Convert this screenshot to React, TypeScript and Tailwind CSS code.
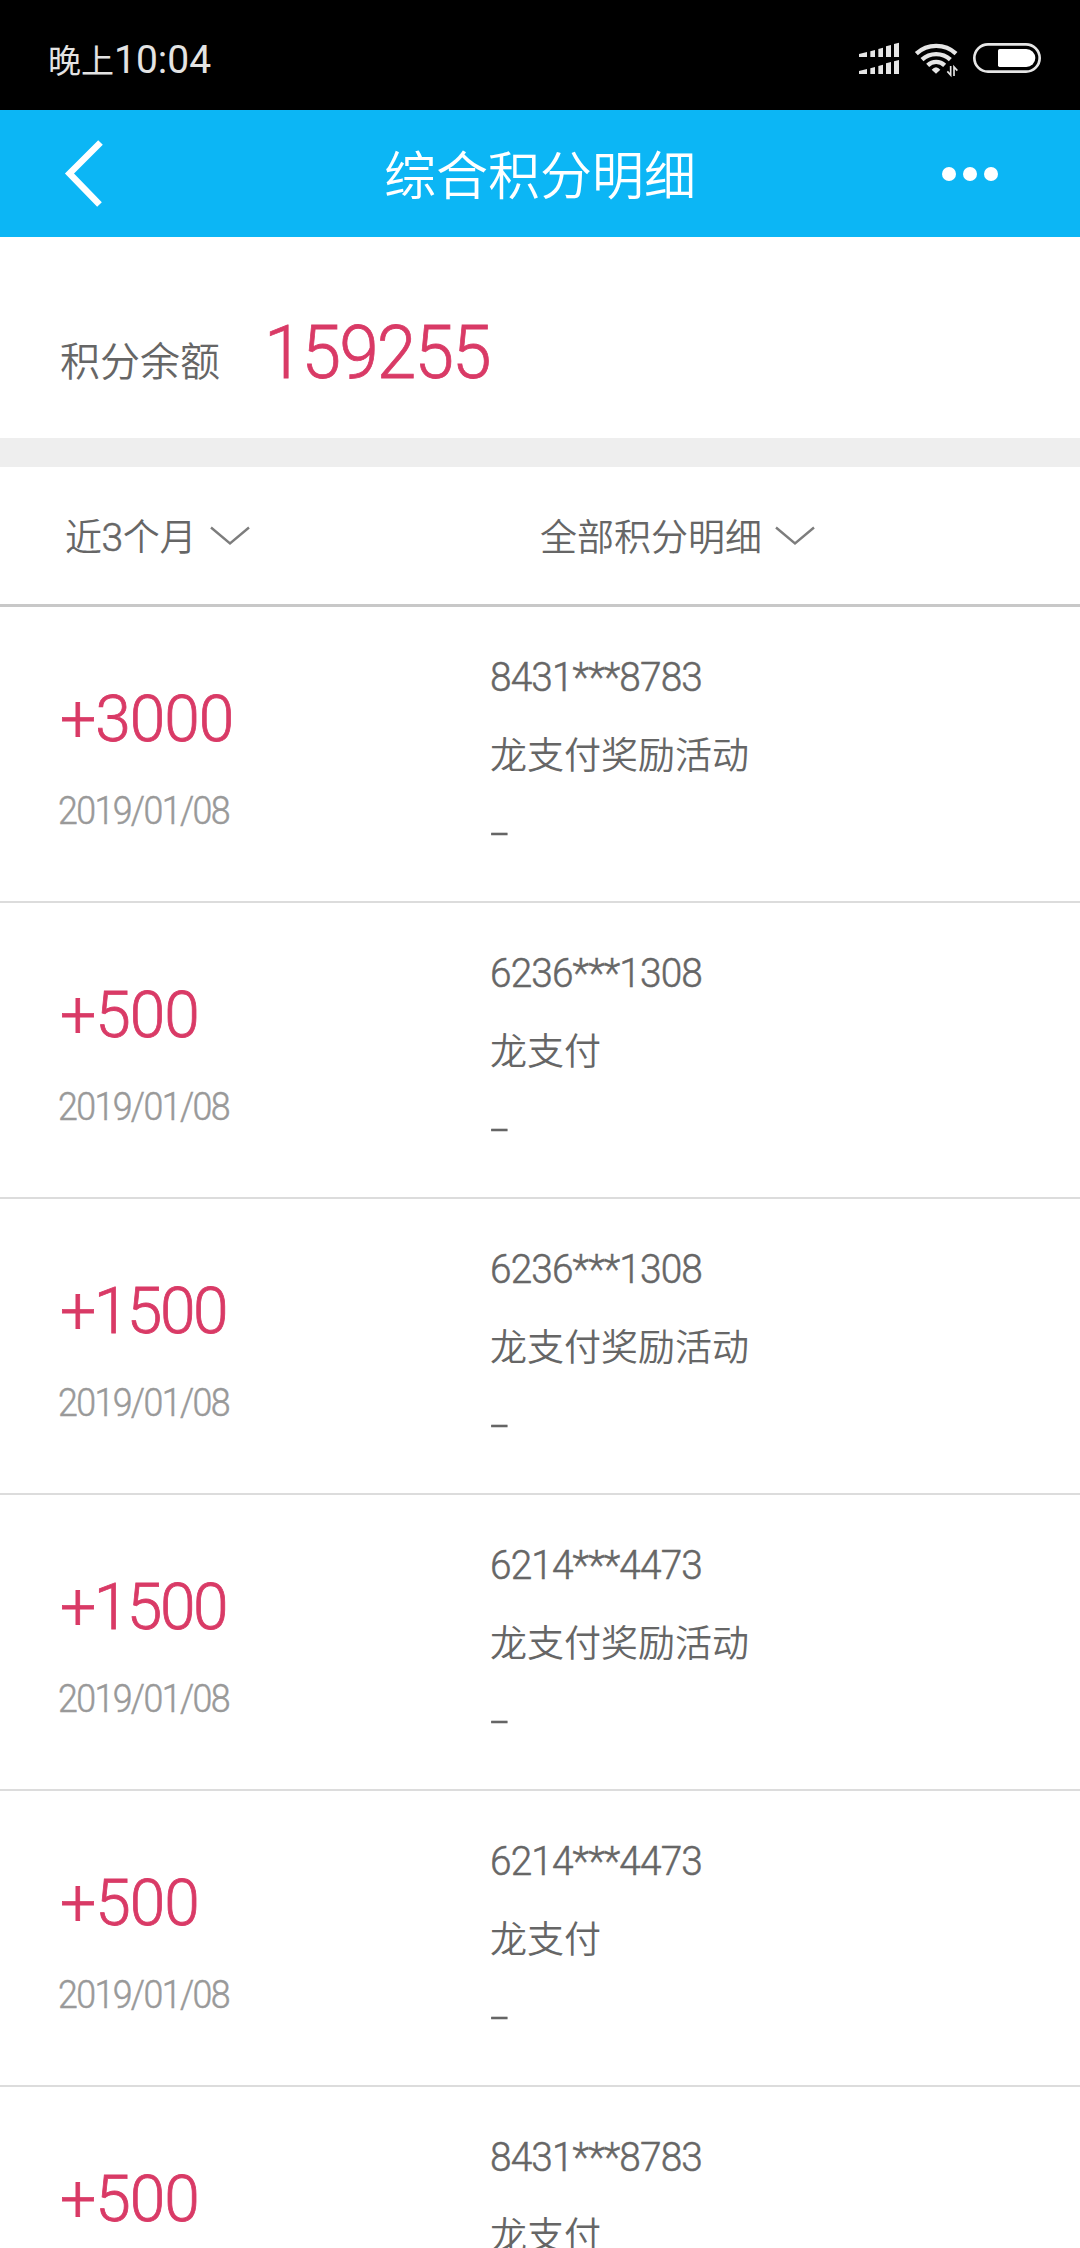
import { clsx } from 'clsx';

interface PointRecord {
  id: number;
  amount: string;
  date: string;
  card: string;
  source: string;
}

const records: PointRecord[] = [
  { id: 1, amount: '+3000', date: '2019/01/08', card: '8431***8783', source: '龙支付奖励活动' },
  { id: 2, amount: '+500', date: '2019/01/08', card: '6236***1308', source: '龙支付' },
  { id: 3, amount: '+1500', date: '2019/01/08', card: '6236***1308', source: '龙支付奖励活动' },
  { id: 4, amount: '+1500', date: '2019/01/08', card: '6214***4473', source: '龙支付奖励活动' },
  { id: 5, amount: '+500', date: '2019/01/08', card: '6214***4473', source: '龙支付' },
  { id: 6, amount: '+500', date: '2019/01/08', card: '8431***8783', source: '龙支付' },
];

function StatusIcons() {
  return (
    <svg className="w-[240px] h-[80px]" viewBox="0 0 720 240" fill="none">
      {/* dual sim signal */}
      <g fill="#e6e6e6">
        <path d="M57 102 L81 96 V111 H57Z" />
        <path d="M91 94 L105 90 V111 H91Z" />
        <path d="M115 87 L129 83 V111 H115Z" />
        <path d="M138 79 L153 75 V111 H138Z" />
        <path d="M162 72 L177 68 V111 H162Z" />
        <path d="M57 153 L81 147 V162 H57Z" />
        <path d="M91 145 L105 141 V162 H91Z" />
        <path d="M115 138 L129 134 V162 H115Z" />
        <path d="M138 130 L153 126 V162 H138Z" />
        <path d="M162 124 L177 120 V162 H162Z" />
      </g>
      {/* wifi */}
      <g stroke="#e6e6e6" strokeWidth="13">
        <path d="M229 101 A88 88 0 0 1 348 101" />
        <path d="M246 119 A62 62 0 0 1 331 119" />
        <path d="M263 136 A37 37 0 0 1 314 136" />
      </g>
      <path d="M275 149 Q288 134 301 149 L288 161Z" fill="#e6e6e6" />
      <path d="M332 138 V165 L322 154 M342 168 V141 L352 152" stroke="#e6e6e6" strokeWidth="5" />
      {/* battery */}
      <rect x="403" y="73" width="196" height="82" rx="41" stroke="#e6e6e6" strokeWidth="8" />
      <path d="M479 87 H559 A27 27 0 0 1 559 141 H479 Q474 141 474 136 V92 Q474 87 479 87Z" fill="#fff" />
    </svg>
  );
}

function DownArrow({ className }: { className?: string }) {
  return (
    <svg className={clsx('w-[40px] h-[20px]', className)} viewBox="0 0 40 20" fill="none" stroke="#7d7d7d" strokeWidth="2.4">
      <path d="M1 1.5 L20 17.5 L39 1.5" />
    </svg>
  );
}

function RecordRow({ record }: { record: PointRecord }) {
  return (
    <li className="flex h-[296px] shrink-0 border-b-2 border-[#dcdcdc]">
      <div className="w-[490px] pl-[58px] pt-[81px]">
        <p
          className={clsx(
            'ml-[2px] h-[64px] text-[64px] leading-[64px] text-[#d93a66] [-webkit-text-stroke:0.8px_#d93a66]',
            record.amount.includes('1') ? 'tracking-[-2.4px]' : 'tracking-[-1px]'
          )}
        >
          {record.amount}
        </p>
        <p className="mt-[39px] h-[40px] origin-left scale-x-[0.94] text-[38px] leading-[40px] tracking-[-1.7px] text-[#999] [-webkit-text-stroke:0.5px_#999]">
          {record.date}
        </p>
      </div>
      <div className="flex flex-col gap-[38px] pt-[51px] text-[#666]">
        <p className="h-[40px] origin-left scale-x-[0.97] text-[40px] leading-[40px] tracking-[-0.9px] [-webkit-text-stroke:0.5px_#666]">
          {record.card}
        </p>
        <p className="h-[40px] pt-px text-[37px] leading-[40px]">{record.source}</p>
        <p className="h-[40px] w-[12px] origin-left scale-x-[1.65] text-[40px] leading-[40px] [-webkit-text-stroke:0.6px_#666]">-</p>
      </div>
    </li>
  );
}

export default function App() {
  return (
    <div className="flex h-[2248px] w-[1080px] flex-col overflow-hidden bg-white font-['Roboto','Noto_Sans_CJK_SC',sans-serif] font-[350]">
      <div className="flex h-[110px] shrink-0 items-start justify-between bg-black pl-[48px] pt-[20px]">
        <p className="mt-[20px] flex h-[40px] items-baseline leading-[40px] font-normal text-[#e3e3e3]">
          <span className="text-[33px]">晚上</span>
          <span className="text-[39px]">10:04</span>
        </p>
        <StatusIcons />
      </div>

      <header className="grid h-[127px] shrink-0 grid-cols-3 items-center bg-[#0cb6f5] text-white">
        <svg className="ml-[60px] h-[70px] w-[50px]" viewBox="0 0 50 70" fill="none" stroke="currentColor" strokeWidth="6.5">
          <path d="M40.5 3.5 L9.5 34.5 L39.5 65.5" />
        </svg>
        <h1 className="pt-[8px] text-center text-[52px] leading-[60px] whitespace-nowrap">综合积分明细</h1>
        <div className="mr-[82px] flex justify-end gap-[7px]">
          <span className="size-[14px] rounded-full bg-white" />
          <span className="size-[14px] rounded-full bg-white" />
          <span className="size-[14px] rounded-full bg-white" />
        </div>
      </header>

      <section className="flex h-[201px] shrink-0 items-start pl-[60px] pt-[77px]">
        <span className="w-[204px] pt-[11px] text-[40px] leading-[76px] text-[#666]">积分余额</span>
        <span className="origin-left scale-x-[0.95] text-[75px] leading-[76px] tracking-[-2px] text-[#d93a66] [-webkit-text-stroke:0.8px_#d93a66]">
          159255
        </span>
      </section>

      <div className="h-[29px] shrink-0 bg-[#eee]" />

      <div className="flex h-[140px] shrink-0 border-b-[3px] border-[#c8c8c8] pt-[51px] text-[37px] leading-[40px] text-[#666]">
        <div className="flex w-[540px] pl-[65px]">
          <span className="tracking-[-0.4px]">
            近<span className="text-[39px] [-webkit-text-stroke:0.5px_#666]">3</span>个月
          </span>
          <DownArrow className="mt-[8px] ml-[14px]" />
        </div>
        <div className="flex">
          <span className="pt-px">全部积分明细</span>
          <DownArrow className="mt-[8px] ml-[13px]" />
        </div>
      </div>

      <ul className="flex flex-col">
        {records.map((record) => (
          <RecordRow key={record.id} record={record} />
        ))}
      </ul>
    </div>
  );
}
